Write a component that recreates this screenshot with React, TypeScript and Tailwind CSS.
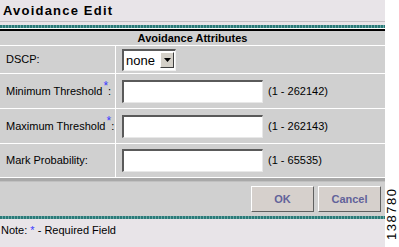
import React from "react";

const font = { fontFamily: '"Liberation Sans", Arial, sans-serif' };

function Req() {
  return <span className="relative -top-[5px] ml-[1px] text-[12px] text-[#3a3aff]">*</span>;
}

function Row({ label, children, h }: { label: React.ReactNode; children: React.ReactNode; h: string }) {
  return (
    <div className={`flex ${h} border-b border-white`}>
      <div className="w-[116px] border-r border-white flex items-center pl-[6px] text-[11px] text-black">{label}</div>
      <div className="flex-1 flex items-center pl-[6px]">{children}</div>
    </div>
  );
}

function TextInput() {
  return (
    <div className="w-[141px] h-[23px] bg-white border-t-2 border-l-2 border-t-[#5a5a5a] border-l-[#5a5a5a] border-b border-r border-b-[#e8e8e8] border-r-[#e8e8e8]" />
  );
}

export default function App() {
  return (
    <div className="relative w-[399px] h-[247px] bg-white flex overflow-hidden" style={font}>
      <div className="w-[385px] flex flex-col">
        <div className="h-[21px] bg-[#e8e4e8] flex items-center pl-[3px] text-[13px] font-bold tracking-[1.2px] text-black">
          Avoidance Edit
        </div>
        <div className="h-[1px] bg-[#c4c0c4]" />
        <div className="h-[3px] bg-[#e8e4e8]" />
        <div className="h-[3px] bg-[repeating-linear-gradient(90deg,#2b7a78_0px,#2b7a78_2px,#6aa8a6_2px,#6aa8a6_3px)]" />
        <div className="h-[1px] bg-white" />
        <div className="h-[2px] bg-black" />
        <div className="bg-[#d0d0d0] flex flex-col">
          <div className="h-[15px] border-b border-white flex items-center justify-center text-[11px] font-bold text-black">
            Avoidance Attributes
          </div>
          <Row label="DSCP:" h="h-[28px]">
            <div className="flex items-center h-[22px] w-[54px] bg-white border-t-2 border-l-2 border-t-[#5a5a5a] border-l-[#5a5a5a] border-b border-r border-b-[#f0f0f0] border-r-[#f0f0f0] pl-[2px]">
              <span className="text-[13px] text-black flex-1 leading-none">none</span>
              <div className="w-[14px] h-[16px] mr-[1px] bg-[#d4d0c8] border border-t-white border-l-white border-b-[#404040] border-r-[#404040] flex items-center justify-center">
                <svg width="7" height="4" viewBox="0 0 7 4"><path d="M0 0h7L3.5 4z" fill="#000" /></svg>
              </div>
            </div>
          </Row>
          <Row label={<span>Minimum Threshold<Req />:</span>} h="h-[35px]">
            <TextInput />
            <span className="ml-[5px] text-[11px] text-black">(1 - 262142)</span>
          </Row>
          <Row label={<span>Maximum Threshold<Req />:</span>} h="h-[35px]">
            <TextInput />
            <span className="ml-[5px] text-[11px] text-black">(1 - 262143)</span>
          </Row>
          <Row label="Mark Probability:" h="h-[34px]">
            <TextInput />
            <span className="ml-[5px] text-[11px] text-black">(1 - 65535)</span>
          </Row>
          <div className="h-[4px] bg-[#a8a8a8] border-b border-[#c0c0c0]" />
          <div className="h-[34px] flex items-center justify-end gap-[4px] pr-[4px]">
            <button className="w-[63px] h-[26px] bg-[#d6d0cc] border border-t-white border-l-white border-b-[#606060] border-r-[#606060] text-[11px] font-bold text-[#62629a]">
              OK
            </button>
            <button className="w-[63px] h-[26px] bg-[#d6d0cc] border border-t-white border-l-white border-b-[#606060] border-r-[#606060] text-[11px] font-bold text-[#62629a]">
              Cancel
            </button>
          </div>
        </div>
        <div className="h-[3px] bg-[repeating-linear-gradient(90deg,#2b7a78_0px,#2b7a78_2px,#6aa8a6_2px,#6aa8a6_3px)]" />
        <div className="flex-1 bg-[#e8e4e8] pt-[3px] pl-[1px] text-[11px] text-black">
          Note: <span className="text-[#3a3aff]">*</span> - Required Field
        </div>
      </div>
      <div className="absolute left-[385px] top-[183px] w-[14px] h-[62px] flex items-center justify-center">
        <span className="-rotate-90 whitespace-nowrap text-[13px] tracking-[1.5px] text-black">138780</span>
      </div>
    </div>
  );
}
